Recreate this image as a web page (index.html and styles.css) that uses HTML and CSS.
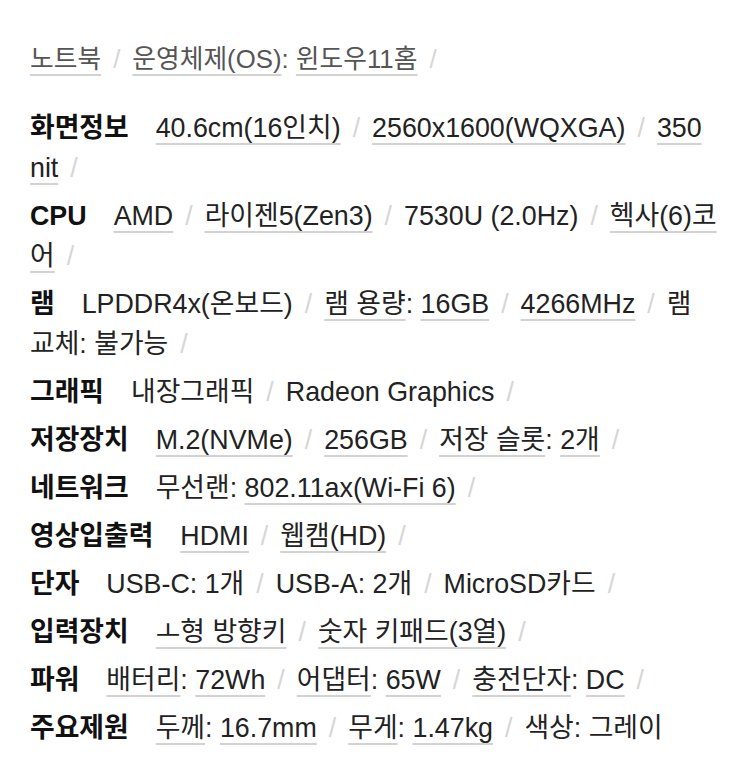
FILE: index.html
```html
<!DOCTYPE html>
<html lang="ko">
<head>
<meta charset="utf-8">
<link rel="stylesheet" href="styles.css">
</head>
<body>
<div class="spec">
  <p class="cat"><a class="u">노트북</a><i class="sep">/</i><a class="u">운영체제(OS)</a>: <a class="u">윈도우11홈</a><i class="sep">/</i></p>
  <p class="row"><b class="lbl">화면정보</b><a class="u">40.6cm(16인치)</a><i class="sep">/</i><a class="u">2560x1600(WQXGA)</a><i class="sep">/</i><a class="u">350 nit</a><i class="sep">/</i></p>
  <p class="row"><b class="lbl">CPU</b><a class="u">AMD</a><i class="sep">/</i><a class="u">라이젠5(Zen3)</a><i class="sep">/</i>7530U (2.0Hz)<i class="sep">/</i><a class="u">헥사(6)코어</a><i class="sep">/</i></p>
  <p class="row"><b class="lbl">램</b>LPDDR4x(온보드)<i class="sep">/</i><a class="u">램 용량</a>: <a class="u">16GB</a><i class="sep">/</i><a class="u">4266MHz</a><i class="sep">/</i>램 교체: 불가능<i class="sep">/</i></p>
  <p class="row"><b class="lbl">그래픽</b>내장그래픽<i class="sep">/</i>Radeon Graphics<i class="sep">/</i></p>
  <p class="row"><b class="lbl">저장장치</b><a class="u">M.2(NVMe)</a><i class="sep">/</i><a class="u">256GB</a><i class="sep">/</i><a class="u">저장 슬롯</a>: <a class="u">2개</a><i class="sep">/</i></p>
  <p class="row"><b class="lbl">네트워크</b>무선랜: <a class="u">802.11ax(Wi-Fi 6)</a><i class="sep">/</i></p>
  <p class="row"><b class="lbl">영상입출력</b><a class="u">HDMI</a><i class="sep">/</i><a class="u">웹캠(HD)</a><i class="sep">/</i></p>
  <p class="row"><b class="lbl">단자</b>USB-C: 1개<i class="sep">/</i>USB-A: 2개<i class="sep">/</i>MicroSD카드<i class="sep">/</i></p>
  <p class="row"><b class="lbl">입력장치</b><a class="u">ㅗ형 방향키</a><i class="sep">/</i><a class="u">숫자 키패드(3열)</a><i class="sep">/</i></p>
  <p class="row"><b class="lbl">파워</b><a class="u">배터리</a>: <a class="u">72Wh</a><i class="sep">/</i><a class="u">어댑터</a>: <a class="u">65W</a><i class="sep">/</i><a class="u">충전단자</a>: <a class="u">DC</a><i class="sep">/</i></p>
  <p class="row"><b class="lbl">주요제원</b><a class="u">두께</a>: <a class="u">16.7mm</a><i class="sep">/</i><a class="u">무게</a>: <a class="u">1.47kg</a><i class="sep">/</i>색상: 그레이</p>
</div>
</body>
</html>
```

FILE: styles.css
```css
html, body {
  margin: 0;
  padding: 0;
  background: #ffffff;
}

.spec {
  padding: 39px 30px 0 30px;
  font-family: "Liberation Sans", "Noto Sans CJK KR", sans-serif;
  font-size: 26px;
  font-size-adjust: 0.545;
  line-height: 40px;
  color: #222222;
}

.spec p {
  margin: 0 0 8px 0;
}

.spec .cat {
  color: #555555;
  font-size: 25px;
  margin-bottom: 29px;
}

.u {
  text-decoration: underline;
  text-decoration-color: #d2d2d2;
  text-decoration-thickness: 2px;
  text-underline-offset: 6px;
  text-decoration-skip-ink: none;
}

.sep {
  font-style: normal;
  color: #d6d6d6;
  margin: 0 12px;
}

.lbl {
  font-weight: bold;
  color: #111111;
  margin-right: 27px;
}
```
